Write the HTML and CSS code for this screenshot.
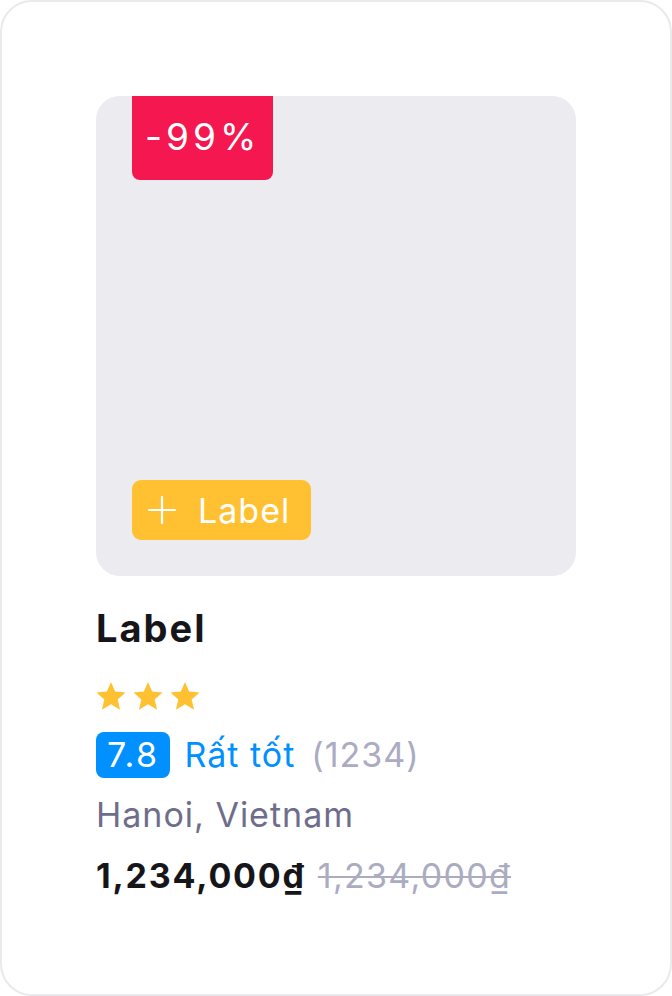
FILE: index.html
```html
<!DOCTYPE html>
<html lang="vi">
<head>
<meta charset="utf-8">
<link rel="stylesheet" href="styles.css">
</head>
<body>
<div class="card">
  <div class="media">
    <div class="discount">-99%</div>
    <div class="tag">
      <svg class="plus" width="28" height="28" viewBox="0 0 28 28"><path d="M14 1V27M1 14H27" stroke="#fff" stroke-width="2.2" stroke-linecap="round"/></svg>
      <span>Label</span>
    </div>
  </div>
  <div class="title">Label</div>
  <div class="stars">
    <svg viewBox="0 0 24 24" class="star"><path d="M12 1.5l3.1 7.2 7.8.7-5.9 5.2 1.8 7.7L12 18.2l-6.8 4.1 1.8-7.7-5.9-5.2 7.8-.7z"/></svg>
    <svg viewBox="0 0 24 24" class="star"><path d="M12 1.5l3.1 7.2 7.8.7-5.9 5.2 1.8 7.7L12 18.2l-6.8 4.1 1.8-7.7-5.9-5.2 7.8-.7z"/></svg>
    <svg viewBox="0 0 24 24" class="star"><path d="M12 1.5l3.1 7.2 7.8.7-5.9 5.2 1.8 7.7L12 18.2l-6.8 4.1 1.8-7.7-5.9-5.2 7.8-.7z"/></svg>
  </div>
  <div class="rating">
    <span class="score">7.8</span>
    <span class="verdict">Rất tốt</span>
    <span class="count">(1234)</span>
  </div>
  <div class="location">Hanoi, Vietnam</div>
  <div class="price">
    <span class="now">1,234,000₫</span>
    <span class="was">1,234,000₫</span>
  </div>
</div>
</body>
</html>
```
FILE: styles.css
```css
html, body {
  margin: 0;
  padding: 0;
  background: #fff;
}
body {
  font-family: Inter, "Noto Sans", sans-serif;
  font-size: 34px;
  letter-spacing: 1px;
}
.card {
  box-sizing: border-box;
  width: 672px;
  height: 996px;
  border: 2px solid #e9e9ee;
  border-radius: 32px;
  padding: 94px;
  display: flex;
  flex-direction: column;
}
.media {
  position: relative;
  width: 480px;
  height: 480px;
  border-radius: 24px;
  background: #ebebf0;
  flex: none;
}
.discount {
  position: absolute;
  left: 36px;
  top: 0;
  width: 141px;
  height: 84px;
  box-sizing: border-box;
  padding: 21px 0 0 13px;
  background: #f5174f;
  color: #fff;
  font-size: 37px;
  line-height: 40px;
  letter-spacing: 4px;
  border-radius: 0 0 8px 8px;
  white-space: nowrap;
}
.tag {
  position: absolute;
  left: 36px;
  bottom: 36px;
  height: 60px;
  box-sizing: border-box;
  padding: 0 21px 0 16px;
  background: #ffc132;
  border-radius: 9px;
  display: flex;
  align-items: center;
  gap: 22px;
  color: #fff;
}
.plus {
  display: block;
}
.title {
  margin-top: 28px;
  font-size: 38px;
  line-height: 48px;
  font-weight: 700;
  letter-spacing: 2px;
  color: #16161a;
}
.stars {
  margin-top: 28px;
  height: 32px;
  display: flex;
  align-items: center;
  gap: 5px;
  margin-left: -1px;
}
.star {
  width: 32px;
  height: 32px;
  fill: #ffc132;
}
.rating {
  margin-top: 20px;
  display: flex;
  align-items: center;
  line-height: 46px;
}
.score {
  background: #0090ff;
  color: #fff;
  border-radius: 8px;
  padding: 0 10px 0 11px;
  letter-spacing: 2.5px;
}
.verdict {
  color: #0090ff;
  margin-left: 15px;
}
.count {
  color: #ababc2;
  margin-left: 16px;
}
.location {
  margin-top: 17px;
  line-height: 40px;
  color: #6e6e8c;
}
.price {
  margin-top: 21px;
  line-height: 40px;
  display: flex;
  gap: 12px;
}
.now {
  font-weight: 700;
  letter-spacing: 1.8px;
  color: #16161a;
}
.was {
  color: #ababc2;
  letter-spacing: 1.3px;
  text-decoration: line-through;
  text-decoration-thickness: 2px;
}
```
